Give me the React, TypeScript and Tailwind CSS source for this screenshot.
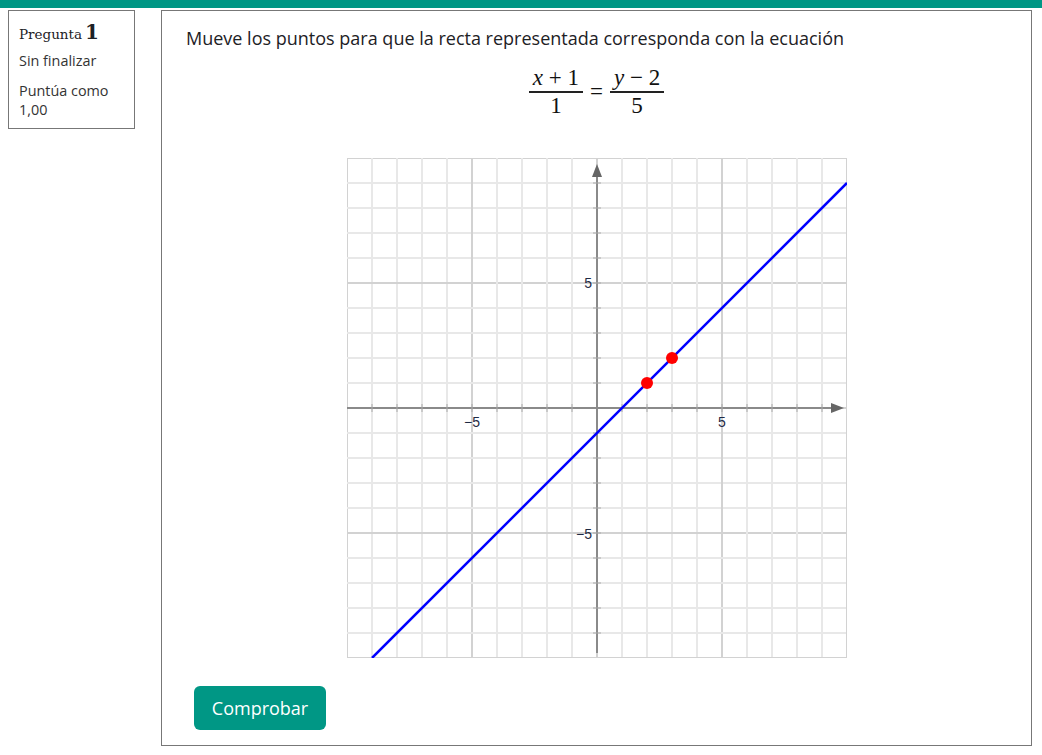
import React from 'react';

const ticks = Array.from({ length: 21 }, (_, i) => i * 25);

const Graph: React.FC = () => {
  return (
    <svg width={500} height={500} viewBox="0 0 500 500" className="block">
      {/* grid */}
      {ticks.map((t) => {
        const major = (t / 25) % 5 === 0;
        const color = major ? '#d2d2d2' : '#e8e8e8';
        return (
          <g key={t}>
            <line x1={t} y1={0} x2={t} y2={500} stroke={color} strokeWidth={2} />
            <line x1={0} y1={t} x2={500} y2={t} stroke={color} strokeWidth={2} />
          </g>
        );
      })}

      {/* axes */}
      <line x1={0} y1={250} x2={488} y2={250} stroke="#8a8a8a" strokeWidth={2} />
      <polygon points="497,250 484,245 484,255" fill="#666" />
      <line x1={250} y1={495} x2={250} y2={16} stroke="#8a8a8a" strokeWidth={2} />
      <polygon points="250,6 245,19 255,19" fill="#666" />

      {/* tick marks */}
      {ticks.map((t) =>
        t === 250 || t === 0 || t === 500 ? null : (
          <g key={'tk' + t}>
            <line x1={t} y1={246} x2={t} y2={254} stroke="#aaa" strokeWidth={1} />
            <line x1={246} y1={t} x2={254} y2={t} stroke="#aaa" strokeWidth={1} />
          </g>
        )
      )}

      {/* labels */}
      <g fontFamily="'Liberation Sans', Arial, sans-serif" fontSize={14} fill="#1f2a44">
        <text x={125} y={269} textAnchor="middle">−5</text>
        <text x={375} y={269} textAnchor="middle">5</text>
        <text x={245} y={130} textAnchor="end">5</text>
        <text x={245} y={381} textAnchor="end">−5</text>
      </g>

      {/* line y = x - 1 */}
      <line x1={25} y1={500} x2={500} y2={25} stroke="#0000ff" strokeWidth={2.5} />

      {/* points */}
      <circle cx={300} cy={225} r={6} fill="#ff0000" />
      <circle cx={325} cy={200} r={6} fill="#ff0000" />
    </svg>
  );
};

const Frac: React.FC<{ num: React.ReactNode; den: React.ReactNode }> = ({ num, den }) => (
  <span className="inline-flex flex-col items-center mx-[4px]">
    <span className="px-[4px] leading-[26px]">{num}</span>
    <span className="w-full h-[2px] bg-[#222]" />
    <span className="px-[4px] leading-[26px]">{den}</span>
  </span>
);

const App: React.FC = () => {
  return (
    <div className="w-[1042px] h-[755px] bg-white overflow-hidden" style={{ fontFamily: "'Open Sans', sans-serif" }}>
      <div className="h-[8px] bg-[#009785]" />

      <div className="flex items-start pl-[8px] pt-[2px]">
        {/* question info */}
        <div className="w-[127px] h-[119px] border border-[#777] px-[10px] pt-[10px] text-[#333]">
          <div className="flex items-baseline text-[13.5px] text-[#1d2125]" style={{ fontFamily: "'DejaVu Serif', serif" }}>
            Pregunta <span className="ml-[3px] text-[20px] font-bold leading-[22px]">1</span>
          </div>
          <div className="mt-[8px] text-[14.4px] leading-[18px]">Sin finalizar</div>
          <div className="mt-[11px] text-[14.4px] leading-[19px]">
            Puntúa como
            <br />
            1,00
          </div>
        </div>

        {/* main content */}
        <div className="ml-[26px] w-[871px] h-[736px] border border-[#777] flex flex-col">
          <p className="pl-[24px] pt-[15px] text-[18px] leading-[25px] text-[#1d2125]">
            Mueve los puntos para que la recta representada corresponda con la ecuación
          </p>

          <div
            className="flex justify-center items-center mt-[14px] text-[23px] text-[#111]"
            style={{ fontFamily: "'Liberation Serif', serif" }}
          >
            <Frac
              num={
                <>
                  <i>x</i> + 1
                </>
              }
              den="1"
            />
            <span className="mx-[3px]">=</span>
            <Frac
              num={
                <>
                  <i>y</i> − 2
                </>
              }
              den="5"
            />
          </div>

          <div className="flex justify-center mt-[39px] pl-[1px]">
            <Graph />
          </div>

          <div className="pl-[32px] mt-[28px]">
            <button className="w-[132px] h-[44px] rounded-[6px] bg-[#009785] text-white text-[18px]">
              Comprobar
            </button>
          </div>
        </div>
      </div>
    </div>
  );
};

export default App;
